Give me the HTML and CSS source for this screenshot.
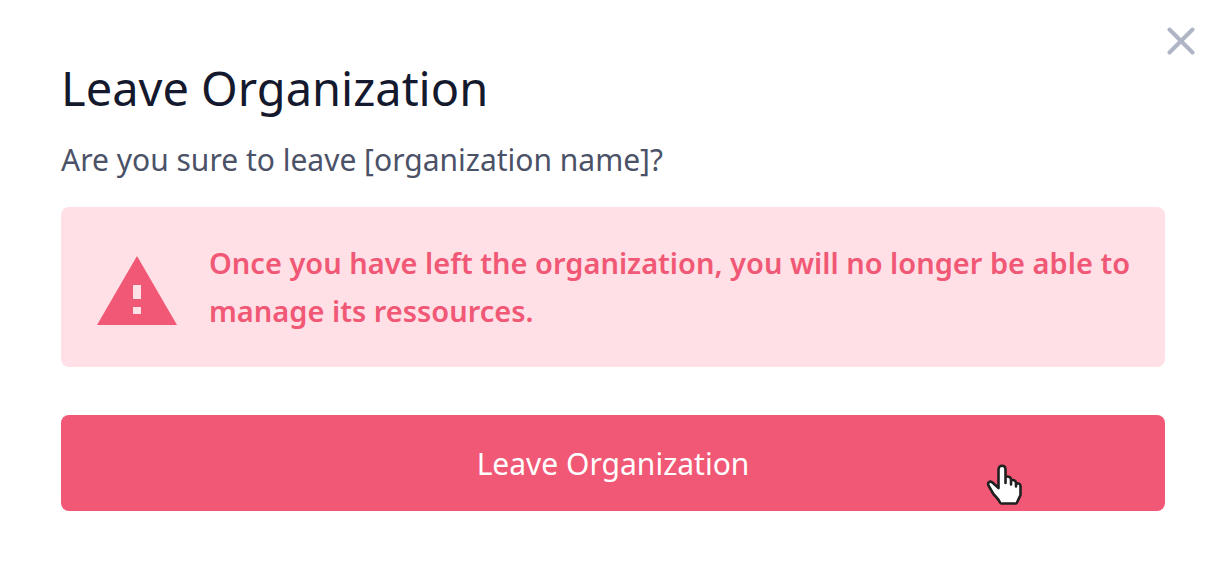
FILE: index.html
```html
<!DOCTYPE html>
<html lang="en">
<head>
<meta charset="utf-8">
<title>Leave Organization</title>
<link rel="stylesheet" href="styles.css">
</head>
<body>
<main class="dialog" role="dialog" aria-labelledby="dialog-title">
  <button class="close" type="button" aria-label="Close">
    <svg viewBox="0 0 28 28" width="28" height="28" aria-hidden="true"><path d="M2.5 2.5 25.5 25.5M25.5 2.5 2.5 25.5" fill="none" stroke="#b0b5c6" stroke-width="4" stroke-linecap="round"/></svg>
  </button>
  <h1 class="title" id="dialog-title">Leave Organization</h1>
  <p class="question">Are you sure to leave [organization name]?</p>
  <div class="alert" role="alert">
    <svg class="alert-icon" viewBox="0 0 80 80" aria-hidden="true"><path fill="#f15875" d="M40 9 80 78H0Z"/><path fill="#ffe0e6" d="M36 38h8v14h-8zM36 60h8v7h-8z"/></svg>
    <p class="alert-text">Once you have left the organization, you will no longer be able to manage its ressources.</p>
  </div>
  <button class="submit" type="button">Leave Organization</button>
  <svg class="pointer" viewBox="0 0 36 42" aria-hidden="true"><path d="M12.5 24V5.5c0-5 7-5 7 0V19v-5c1-2.500 5.500-1.500 5.500 1.500v5V17c1.500-2 5-.5 5 2v3.500V20c2-1.500 4.500 0 4.500 2v9l-3.500 7.500q-.5 1-1.500 1H15.500q-1 0-1.500-1C12 34 8.500 32 6.500 28.500L2.500 21.500c-1.500-3 1.500-5 4-3z" fill="#fff" stroke="#202020" stroke-width="2.600" stroke-linejoin="round"/></svg>
</main>
</body>
</html>
```
FILE: styles.css
```css
* { box-sizing: border-box; }
body { margin: 0; background: #fff; font-family: "Noto Sans", sans-serif; }
.dialog { position: relative; padding: 56px 58px 58px 61px; }
.close { position: absolute; top: 27px; right: 28px; padding: 0; border: 0; background: none; cursor: pointer; }
.close svg { display: block; }
.title { margin: 0; color: #14192d; font-size: 47px; line-height: 64px; font-weight: 400; }
.question { margin: 16px 0 23px; color: #4b5268; font-size: 30px; line-height: 48px; }
.alert { display: flex; align-items: center; gap: 32px; padding: 32px 28px 32px 36px; border-radius: 8px; background: #ffe0e6; }
.alert-icon { flex: none; width: 80px; height: 80px; }
.alert-text { margin: 0; color: #f15875; font-size: 29px; line-height: 48px; font-weight: 600; }
.submit { display: block; width: 100%; height: 96px; margin-top: 48px; border: 0; border-radius: 8px; background: #f15875; color: #fff; font: inherit; font-size: 30px; cursor: pointer; }
.pointer { position: absolute; right: 201px; bottom: 63px; width: 36px; height: 42px; }
```
